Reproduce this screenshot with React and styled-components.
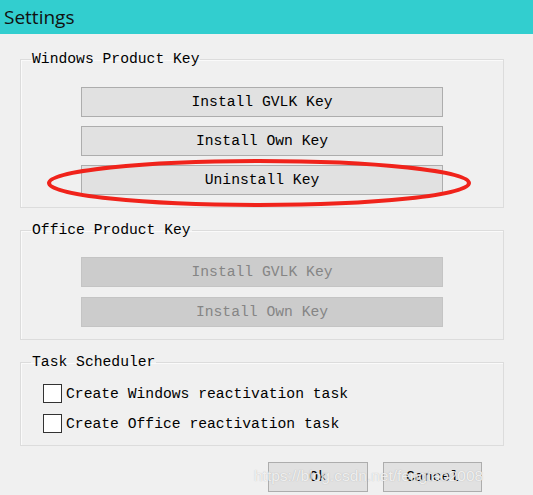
import React from "react";
import styled, { createGlobalStyle } from "styled-components";

const GlobalStyle = createGlobalStyle`
  html, body {
    margin: 0;
    padding: 0;
    background: #f0f0f0;
  }
`;

const Window = styled.div`
  position: relative;
  width: 533px;
  height: 495px;
  overflow: hidden;
  background: #f0f0f0;
  font-family: "Liberation Mono", "Courier New", monospace;
  font-size: 14.7px;
  color: #000;
`;

const TitleBar = styled.div`
  height: 34px;
  display: flex;
  align-items: center;
  padding-left: 4px;
  background: #32cecf;
  font-family: "Open Sans", "Noto Sans", sans-serif;
  font-size: 19px;
  color: #111;
`;

const Body = styled.div`
  display: flex;
  flex-direction: column;
  gap: 13px;
  padding: 16px 29px 0 20px;
`;

const Group = styled.fieldset`
  margin: 0;
  min-width: 0;
  padding: ${p => p.$padTop}px 0 12px 0;
  border: 1px solid #dcdcdc;
  box-shadow: inset 1px 1px 0 #fafafa;
  display: flex;
  flex-direction: column;
  align-items: ${p => (p.$center ? "center" : "flex-start")};
  gap: ${p => p.$gap}px;
`;

const Legend = styled.legend`
  margin-left: 10px;
  padding: 0 1px;
  line-height: 18px;
  height: 18px;
`;

const Button = styled.button`
  width: ${p => p.$width || 362}px;
  height: 30px;
  margin: 0;
  padding: 0;
  font: inherit;
  color: ${p => (p.disabled ? "#858585" : "#000")};
  background: ${p => (p.disabled ? "#cccccc" : "#e1e1e1")};
  border: 1px solid ${p => (p.disabled ? "#c4c4c4" : "#adadad")};
`;

const CheckList = styled.div`
  display: flex;
  flex-direction: column;
  gap: 11px;
  padding-left: 22px;
`;

const CheckRow = styled.label`
  display: flex;
  align-items: center;
  gap: 4px;
  height: 19px;
`;

const Box = styled.span`
  width: 17px;
  height: 17px;
  border: 1px solid #333;
  background: #fff;
`;

const Footer = styled.div`
  display: flex;
  justify-content: flex-end;
  gap: 15px;
  padding: 3px 22px 0 0;
`;

const Mark = styled.svg`
  position: absolute;
  left: 46px;
  top: 158px;
`;

const Watermark = styled.div`
  position: absolute;
  left: 254px;
  top: 467px;
  font-family: "Liberation Sans", Arial, sans-serif;
  font-size: 15.5px;
  color: rgba(255, 255, 255, 0.8);
  text-shadow: 0 0 1px rgba(120, 120, 120, 0.5);
  white-space: nowrap;
`;

const Check = ({ children }) => (
  <CheckRow>
    <Box />
    {children}
  </CheckRow>
);

const App = () => {
  return (
    <Window>
      <GlobalStyle />
      <TitleBar>Settings</TitleBar>
      <Body>
        <Group $padTop={19} $gap={9} $center>
          <Legend>Windows Product Key</Legend>
          <Button>Install GVLK Key</Button>
          <Button>Install Own Key</Button>
          <Button>Uninstall Key</Button>
        </Group>
        <Group $padTop={18} $gap={10} $center>
          <Legend>Office Product Key</Legend>
          <Button disabled>Install GVLK Key</Button>
          <Button disabled>Install Own Key</Button>
        </Group>
        <Group $padTop={13} $gap={0}>
          <Legend>Task Scheduler</Legend>
          <CheckList>
            <Check>Create Windows reactivation task</Check>
            <Check>Create Office reactivation task</Check>
          </CheckList>
        </Group>
        <Footer>
          <Button $width={100}>Ok</Button>
          <Button $width={99}>Cancel</Button>
        </Footer>
      </Body>
      <Mark width="428" height="50" viewBox="0 0 428 50">
        <ellipse cx="213" cy="25" rx="210" ry="22" fill="none" stroke="#f0231b" strokeWidth="4" />
      </Mark>
      <Watermark>https://blog.csdn.net/fengtao2008</Watermark>
    </Window>
  );
};

export default App;
